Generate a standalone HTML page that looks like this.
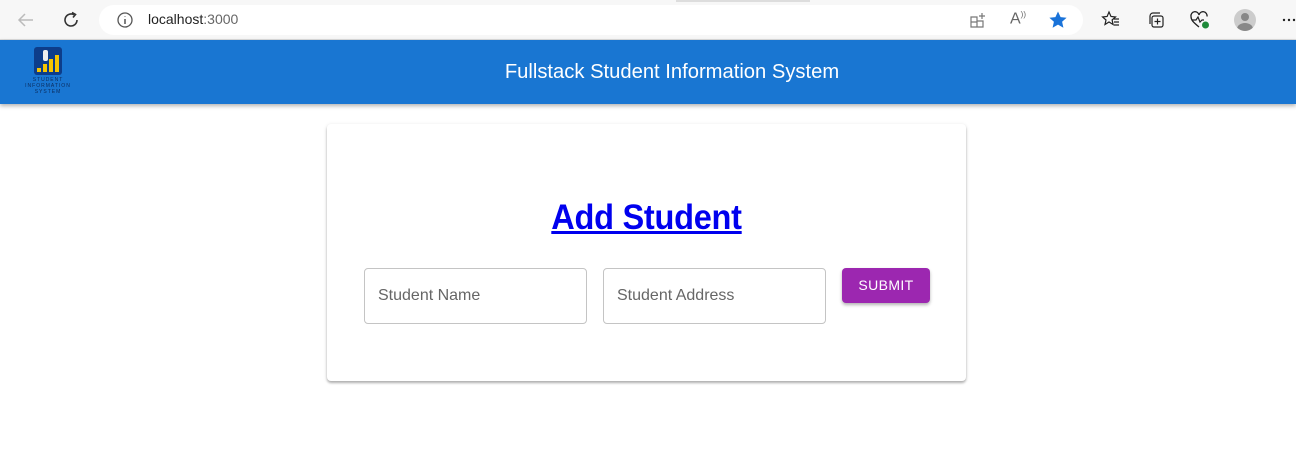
<!DOCTYPE html>
<html><head><style>
body{margin:0;width:1296px;height:460px;overflow:hidden;background:#fff;font-family:"Liberation Sans",sans-serif;position:relative}
.abs{position:absolute}
</style></head><body>
<div class="abs" style="left:0;top:0;width:1296px;height:40px;background:#f7f7f7;border-bottom:1px solid #ddd;box-sizing:border-box"></div>
<div class="abs" style="left:676px;top:0;width:134px;height:2px;background:#ddd"></div>
<svg class="abs" style="left:16px;top:10px" width="20" height="20"><path d="M17 10H3M9 4L3 10L9 16" stroke="#bbb" stroke-width="1.5" fill="none"/></svg>
<svg class="abs" style="left:61px;top:10px" width="20" height="20"><path d="M16 10A6 6 0 1 1 13 4.8" stroke="#333" stroke-width="1.6" fill="none"/><path d="M11 2.5L14.5 4.5L12 7.5" stroke="#333" stroke-width="1.6" fill="none"/></svg>
<div class="abs" style="left:99px;top:5px;width:984px;height:30px;background:#fff;border-radius:15px"></div>
<svg class="abs" style="left:116px;top:11px" width="18" height="18"><circle cx="9" cy="9" r="7" stroke="#555" stroke-width="1.3" fill="none"/><path d="M9 8v5M9 5.5v.5" stroke="#555" stroke-width="1.5"/></svg>
<div class="abs" style="left:148px;top:11px;font-size:14px;color:#222">localhost<span style="color:#666">:3000</span></div>
<svg class="abs" style="left:969px;top:11px" width="18" height="18"><path d="M2 6h6v10H2zM8 10h6v6H8M2 11h6" stroke="#777" stroke-width="1.2" fill="none"/><path d="M13 2v6M10 5h6" stroke="#777" stroke-width="1.2"/></svg>
<div class="abs" style="left:1010px;top:10px;font-size:16px;color:#666">A<sup style="font-size:8px">))</sup></div>
<svg class="abs" style="left:1048px;top:10px" width="20" height="20"><path d="M10 1.5l2.6 5.6 6 .6-4.5 4 1.3 6-5.4-3.1-5.4 3.1 1.3-6-4.5-4 6-.6z" fill="#1a73d9"/></svg>
<svg class="abs" style="left:1101px;top:10px" width="20" height="20"><path d="M8 2l2 4.5 4.5.5-3.4 3 1 4.5L8 12l-4 2.5 1-4.5-3.4-3 4.5-.5z" stroke="#222" stroke-width="1.2" fill="none"/><path d="M13 9h5M13 12h5M13 15h5" stroke="#222" stroke-width="1.2"/></svg>
<svg class="abs" style="left:1146px;top:10px" width="20" height="20"><rect x="6" y="6" width="11" height="11" rx="2" stroke="#222" stroke-width="1.2" fill="none"/><path d="M4 14V6a3 3 0 0 1 3-3h7" stroke="#222" stroke-width="1.2" fill="none"/><path d="M11.5 8.5v6M8.5 11.5h6" stroke="#222" stroke-width="1.2"/></svg>
<svg class="abs" style="left:1189px;top:10px" width="22" height="20"><path d="M10 17C4 12 2 10 2 6.5A4 4 0 0 1 10 5a4 4 0 0 1 8 1.5" stroke="#222" stroke-width="1.3" fill="none"/><path d="M3 10h4l2-3 2 5 2-2h2" stroke="#222" stroke-width="1.2" fill="none"/><circle cx="16.5" cy="15" r="3.5" fill="#1e8a3a"/></svg>
<div class="abs" style="left:1234px;top:9px;width:22px;height:22px;border-radius:50%;background:#ccc;overflow:hidden"><div class="abs" style="left:7px;top:4px;width:8px;height:8px;border-radius:50%;background:#888"></div><div class="abs" style="left:3px;top:14px;width:16px;height:12px;border-radius:50%;background:#888"></div></div>
<svg class="abs" style="left:1282px;top:18px" width="14" height="4"><circle cx="2" cy="2" r="1.2" fill="#222"/><circle cx="7" cy="2" r="1.2" fill="#222"/><circle cx="12" cy="2" r="1.2" fill="#222"/></svg>

<div class="abs" style="left:0;top:40px;width:1296px;height:64px;background:#1976d2;box-shadow:0 2px 4px rgba(0,0,0,.3)"></div>
<div class="abs" style="left:34px;top:47px;width:28px;height:28px;background:#0d3d8a;border-radius:3px;overflow:hidden">
<div class="abs" style="left:3px;top:21px;width:4px;height:4px;background:#f5c400"></div>
<div class="abs" style="left:9px;top:17px;width:4px;height:8px;background:#f5c400"></div>
<div class="abs" style="left:15px;top:12px;width:4px;height:13px;background:#f5c400"></div>
<div class="abs" style="left:21px;top:8px;width:4px;height:17px;background:#f5c400"></div>
<div class="abs" style="left:9px;top:3px;width:5px;height:11px;background:#eee;border-radius:2px"></div>
</div>
<div class="abs" style="left:20px;top:77px;width:56px;text-align:center;font-size:5px;line-height:6px;color:#0b2a5a;letter-spacing:1px">STUDENT<br>INFORMATION<br>SYSTEM</div>
<div class="abs" style="left:0;top:61px;width:1344px;text-align:center;color:#fff;font-size:20.2px">Fullstack Student Information System</div>

<div class="abs" style="left:327px;top:124px;width:639px;height:257px;background:#fff;border-radius:4px;box-shadow:0 2px 2px rgba(0,0,0,.25),0 1px 4px rgba(0,0,0,.12)"></div>
<div class="abs" style="left:327px;top:198px;width:639px;text-align:center;font-family:'Liberation Sans',sans-serif;font-weight:bold;font-size:35px;color:#0000ee;text-decoration:underline;letter-spacing:-0.3px;transform:scaleX(0.93)">Add Student</div>
<div class="abs" style="left:364px;top:268px;width:221px;height:54px;border:1px solid #c4c4c4;border-radius:4px"></div>
<div class="abs" style="left:378px;top:287px;font-size:16px;color:#666">Student Name</div>
<div class="abs" style="left:603px;top:268px;width:221px;height:54px;border:1px solid #c4c4c4;border-radius:4px"></div>
<div class="abs" style="left:617px;top:287px;font-size:16px;color:#666">Student Address</div>
<div class="abs" style="left:842px;top:268px;width:88px;height:35px;background:#9c27b0;border-radius:4px;box-shadow:0 2px 3px rgba(0,0,0,.3);color:#fff;font-size:14px;line-height:35px;text-align:center;letter-spacing:.4px">SUBMIT</div>
</body></html>
